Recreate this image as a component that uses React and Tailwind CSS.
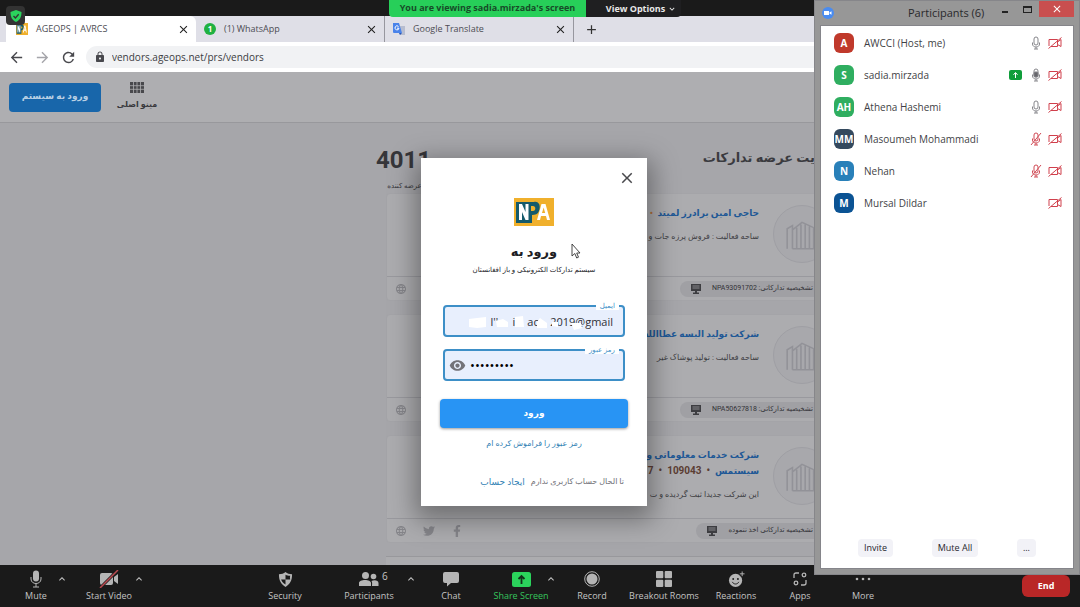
import React from 'react';
import { MdRemoveRedEye, MdLock, MdArrowBack, MdArrowForward, MdRefresh, MdClose, MdAdd, MdKeyboardArrowDown, MdKeyboardArrowUp, MdLanguage } from 'react-icons/md';
import { FaTwitter, FaFacebookF } from 'react-icons/fa';

const latin = "font-['Open_Sans','Noto_Sans',sans-serif]";

function NpaLogo({ className }) {
  return (
    <svg viewBox="0 0 40 28" className={className} preserveAspectRatio="none" aria-hidden="true">
      <rect width="40" height="28" fill="#f0b02c" />
      <path d="M2 4H20C25 3 27 8 25 13C24 16 21 17 18 17V25H2Z" fill="#155a6b" />
      <path d="M5 22V6H8L11.500 14V6H14.500V22H11.500L8 14V22Z" fill="#fff" />
      <path d="M17 8H19C22 8 22 13 19 13H17Z" fill="#f0b02c" />
      <path d="M23 22L27.500 6H31.500L36 22H33L32 18H27L26 22ZM28 15H31.200L29.600 9.500Z" fill="#fff" fillRule="evenodd" />
    </svg>
  );
}

function Tab({ icon, title, active }) {
  return (
    <div className={active ? 'flex w-[190px] items-center gap-2 rounded-t-md bg-white pr-1.5 pl-2.5' : 'flex w-[189px] items-center gap-2 border-r border-[#97979f] bg-[#dfdfe7] bg-clip-padding pr-1.5 pl-2'}>
      {icon}
      <span className="flex-1 text-[9px] text-[#4c4c53]">{title}</span>
      <button aria-label={'Close ' + title} className="text-[#222]"><MdClose size={13} /></button>
    </div>
  );
}

function Building() {
  return (
    <div className="flex size-[58px] shrink-0 items-center justify-center rounded-full border border-[#9f9fa4] bg-[#a8a8ac]">
      <svg viewBox="0 0 34 34" className="size-9" fill="none" stroke="#929298" strokeWidth="1.500" aria-hidden="true">
        <path d="M3 31V12L8 9V31M8 13L17 6L28 11V31H8M12 11V31M16 8V31M20 8V31M24 10V31M28 14L32 17V31H28" />
      </svg>
    </div>
  );
}

function ChipIcon() {
  return (
    <svg viewBox="0 0 12 12" className="size-3 shrink-0" aria-hidden="true">
      <path d="M1 1H11V8H7V9.500H9V11H3V9.500H5V8H1Z" fill="#3d3d41" />
      <path d="M2.500 3H9.500M2.500 5H9.500" stroke="#9d9da0" strokeWidth=".8" />
    </svg>
  );
}

function Company({ name, second, note, chip, social }) {
  return (
    <article className="flex h-[108px] flex-col rounded-sm border border-[#a4a4a8] bg-[#acacaf]">
      <div className="flex h-[82px] gap-3.5 pt-[11px] pr-10">
        <Building />
        <div className="min-w-0 flex-1 overflow-hidden whitespace-nowrap">
          <h2 className="text-[9px] leading-4 font-bold text-[#1e5896]">{name}</h2>
          {second && <p className="text-[9px] leading-4 font-bold text-[#1e5896]">{second}</p>}
          <p className="mt-2 text-[8px] leading-4 text-[#3e3e43]">{note}</p>
        </div>
      </div>
      <div className="flex flex-1 items-center justify-between border-t border-[#99999e]">
        <div className="flex h-4 items-center gap-2.5 rounded-l-full bg-[#a0a0a4] pr-[58px] pl-2.5 text-[7px] whitespace-nowrap text-[#333338]">
          <span>{chip}</span>
          <ChipIcon />
        </div>
        <div dir="ltr" className="flex gap-4 pl-2 text-[#85858a]">
          <MdLanguage size={12} />
          {social && <FaTwitter size={12} />}
          {social && <FaFacebookF size={12} />}
        </div>
      </div>
    </article>
  );
}

function MicIcon({ muted, filled }) {
  return (
    <svg viewBox="0 0 12 14" className="h-3.5 w-3" fill="none" stroke={muted ? '#d04a55' : '#85858a'} aria-hidden="true">
      <rect x="4" y="1" width="4" height="8" rx="2" />
      {filled && <rect x="4" y="4" width="4" height="5" rx="1" fill="#66666c" />}
      <path d="M2.500 6.500V8C2.500 12 9.500 12 9.500 8V6.500M6 11V13M4 13H8" />
      {muted && <path d="M11 1L1 13" />}
    </svg>
  );
}

function CamOffIcon() {
  return (
    <svg viewBox="0 0 14 12" className="h-3 w-3.5" fill="none" stroke="#d0404c" aria-hidden="true">
      <path d="M9.500 7.500V9.500H3M1 9V2.500H9.500V5L13 2.500V9.500L9.500 7.500V5M13.500 .5L.5 11.500" />
    </svg>
  );
}

const people = [
  { initials: 'A', name: 'AWCCI (Host, me)', color: 'bg-[#c0392b]', mic: 'on' },
  { initials: 'S', name: 'sadia.mirzada', color: 'bg-[#2fae60]', mic: 'talking', sharing: true },
  { initials: 'AH', name: 'Athena Hashemi', color: 'bg-[#2fae60]', mic: 'on' },
  { initials: 'MM', name: 'Masoumeh Mohammadi', color: 'bg-[#34495e]', mic: 'muted' },
  { initials: 'N', name: 'Nehan', color: 'bg-[#2980b9]', mic: 'muted' },
  { initials: 'M', name: 'Mursal Dildar', color: 'bg-[#0b5394]' },
];

function Participants() {
  return (
    <aside className="absolute top-0 right-0 z-30 flex h-[575px] w-[266px] flex-col border border-[#86868a] bg-[#979797] px-[5px] pb-[5px]">
      <header className="flex h-6 shrink-0 items-center pl-0.5">
        <span className="flex size-3 items-center justify-center rounded-full bg-[#4a8cf0]">
          <svg viewBox="0 0 8 6" className="w-2" fill="#fff" aria-hidden="true"><path d="M0 1H5V5H0ZM5.500 2.500L7.500 1.300V4.700L5.500 3.500Z" /></svg>
        </span>
        <h2 className="ml-[74px] text-[11px] text-[#29292c]">Participants (6)</h2>
        <div className="ml-auto flex items-start self-start">
          <button aria-label="Minimize" className="flex h-4 w-5 items-end justify-center pb-1"><span className="h-0.5 w-1.5 bg-[#222]" /></button>
          <button aria-label="Maximize" className="flex h-4 w-6 items-center justify-center"><span className="h-[7px] w-[9px] border border-t-2 border-[#222]" /></button>
          <button aria-label="Close window" className="flex h-4 w-[35px] items-center justify-center bg-[#c94f4f] text-white"><MdClose size={12} /></button>
        </div>
      </header>
      <div className="flex flex-1 flex-col border border-[#85858a] bg-white">
        <ul className="flex flex-col gap-3 pt-[7px] pr-[11px] pl-[13px]">
          {people.map((p) => (
            <li key={p.name} className="flex h-5 items-center">
              <span className={'flex size-5 items-center justify-center rounded-md text-[10px] font-bold text-white ' + p.color}>{p.initials}</span>
              <span className="ml-2.5 flex-1 text-[10px] text-[#3f3f46]">{p.name}</span>
              <span className="flex items-center gap-1.5">
                {p.sharing && <svg viewBox="0 0 13 10" className="mr-0.5 w-[13px]" aria-hidden="true"><rect width="13" height="10" rx="2" fill="#0f9d3a" /><path d="M6.500 8V3M4.500 4.800L6.500 2.500L8.500 4.800" stroke="#fff" fill="none" /></svg>}
                {p.mic && <MicIcon muted={p.mic === 'muted'} filled={p.mic === 'talking'} />}
                <CamOffIcon />
              </span>
            </li>
          ))}
        </ul>
        <div className="mt-auto mb-[11px] flex justify-between px-[37px] text-[9px] font-medium text-[#26262e]">
          <button className="h-[18px] rounded bg-[#f2f2f7] px-1.5">Invite</button>
          <button className="h-[18px] rounded bg-[#f2f2f7] px-1.5">Mute All</button>
          <button aria-label="More options" className="h-[18px] rounded bg-[#f2f2f7] px-1.5">...</button>
        </div>
      </div>
    </aside>
  );
}

function Tool({ label, width, green, children }) {
  return (
    <button className={'flex shrink-0 flex-col items-center whitespace-nowrap text-[9px] leading-3 ' + width + (green ? ' text-[#35c65d]' : ' text-[#c4c4c4]')}>
      <span className="relative flex h-[18px] items-center">{children}</span>
      <span className="mt-0.5">{label}</span>
    </button>
  );
}

function Caret({ label, className }) {
  return <button aria-label={label} className={'flex h-[18px] w-3 shrink-0 items-center justify-center text-[#c4c4c4] ' + (className || '')}><MdKeyboardArrowUp size={12} /></button>;
}

function MeetingBar() {
  return (
    <footer className="flex h-[42px] shrink-0 items-start bg-[#1a1a1a] pt-[5px] pl-4">
      <Tool label="Mute" width="w-10">
        <svg viewBox="0 0 12 18" className="w-3" aria-hidden="true"><rect x="3" y="0.500" width="6" height="11" rx="3" fill="#b5b5b5" /><path d="M1 7V9C1 15 11 15 11 9V7M6 13.500V17M3 17H9" stroke="#b5b5b5" fill="none" /></svg>
      </Tool>
      <Caret label="Audio settings" />
      <Tool label="Start Video" width="ml-[17px] w-12">
        <svg viewBox="0 0 20 18" className="w-5" aria-hidden="true"><rect x="1" y="3" width="13" height="12" rx="2" fill="#b5b5b5" /><path d="M15 7L19 4V14L15 11Z" fill="#b5b5b5" /><path d="M19 0L1 18" stroke="#1a1a1a" strokeWidth="3" /><path d="M19 0L1 18" stroke="#b94a50" strokeWidth="1.500" /></svg>
      </Tool>
      <Caret label="Video settings" />
      <Tool label="Security" width="ml-[116px] w-12">
        <svg viewBox="0 0 16 18" className="w-[15px]" aria-hidden="true"><path d="M8 1C10 3 12 3 15 3.500C15 10 13 14 8 17C3 14 1 10 1 3.500C4 3 6 3 8 1Z" fill="#b5b5b5" /><path d="M8 4V9H13C12.500 6 13 6 13 5C11 5 9.500 4.700 8 4ZM8 9V14.500C5 12.500 4 11 3.300 9Z" fill="#1a1a1a" /></svg>
      </Tool>
      <Tool label="Participants" width="ml-8 w-14">
        <svg viewBox="0 0 20 16" className="w-5" fill="#b5b5b5" aria-hidden="true"><circle cx="6.500" cy="4.500" r="3.500" /><circle cx="14.500" cy="5.500" r="2.800" /><path d="M0 15V12C0 8 12 8 12 12V15ZM13 15H19.500V12C19.500 9 15 8.500 12.500 10C13.500 12 13 13 13 15Z" /></svg>
        <span className="absolute top-0 left-[23px] text-[10px]">6</span>
      </Tool>
      <Caret label="Participant settings" className="ml-2" />
      <Tool label="Chat" width="ml-[18px] w-8">
        <svg viewBox="0 0 16 16" className="w-4" aria-hidden="true"><path d="M2 1H14Q16 1 16 3V10Q16 12 14 12H8L4 15.500V12H2Q0 12 0 10V3Q0 1 2 1Z" fill="#b5b5b5" /></svg>
      </Tool>
      <Tool label="Share Screen" width="ml-[26px] w-14" green>
        <svg viewBox="0 0 19 15" className="w-[19px]" aria-hidden="true"><rect width="19" height="15" rx="2.500" fill="#2bd35c" /><path d="M9.500 12V4.500M6.500 7L9.500 4L12.500 7" stroke="#12301b" strokeWidth="1.800" fill="none" /></svg>
      </Tool>
      <Caret label="Share settings" className="-ml-1" />
      <Tool label="Record" width="ml-[15px] w-10">
        <svg viewBox="0 0 16 16" className="w-4" aria-hidden="true"><circle cx="8" cy="8" r="7.300" fill="none" stroke="#b5b5b5" /><circle cx="8" cy="8" r="5.500" fill="#b5b5b5" /></svg>
      </Tool>
      <Tool label="Breakout Rooms" width="ml-4 w-18">
        <svg viewBox="0 0 16 16" className="w-4" fill="#b5b5b5" aria-hidden="true"><rect width="7.300" height="7.300" rx="1" /><rect x="8.700" width="7.300" height="7.300" rx="1" /><rect y="8.700" width="7.300" height="7.300" rx="1" /><rect x="8.700" y="8.700" width="7.300" height="7.300" rx="1" /></svg>
      </Tool>
      <Tool label="Reactions" width="ml-3 w-12">
        <svg viewBox="0 0 18 18" className="w-[17px]" aria-hidden="true"><circle cx="8" cy="10" r="7" fill="#b5b5b5" /><circle cx="5.500" cy="8.500" r="1" fill="#1a1a1a" /><circle cx="10.500" cy="8.500" r="1" fill="#1a1a1a" /><path d="M4.500 11.500C6 14.500 10 14.500 11.500 11.500" stroke="#1a1a1a" fill="none" /><path d="M15 0V6M12 3H18" stroke="#1a1a1a" strokeWidth="3" /><path d="M15 .5V5.500M12.500 3H17.500" stroke="#b5b5b5" /></svg>
      </Tool>
      <Tool label="Apps" width="ml-6 w-8">
        <svg viewBox="0 0 14 14" className="w-3.5" fill="none" stroke="#b5b5b5" strokeWidth="1.300" aria-hidden="true"><path d="M1 6V3Q1 1 3 1H6M13 8V11Q13 13 11 13H8" /><circle cx="11" cy="3" r="1.800" /><circle cx="3" cy="11" r="1.800" /></svg>
      </Tool>
      <Tool label="More" width="ml-[31px] w-8">
        <svg viewBox="0 0 16 4" className="w-4" fill="#b5b5b5" aria-hidden="true"><circle cx="2" cy="2" r="1.300" /><circle cx="8" cy="2" r="1.300" /><circle cx="14" cy="2" r="1.300" /></svg>
      </Tool>
      <button className="mt-[5px] mr-2.5 ml-auto h-[22px] w-12 rounded-md bg-[#b92727] text-[9px] font-bold text-white">End</button>
    </footer>
  );
}

function LoginDialog() {
  return (
    <section dir="rtl" role="dialog" aria-label="ورود" className="flex h-[348px] w-[226px] flex-col bg-white px-[19px] shadow-[0_8px_24px_6px_rgba(0,0,0,0.35)]">
      <div className="flex h-10 items-center">
        <button aria-label="بستن" className="-mr-2 text-[#48484c]"><MdClose size={18} /></button>
      </div>
      <NpaLogo className="h-7 w-10 self-center" />
      <h1 className="mt-4 text-center text-[13px] leading-5 font-bold text-[#202024]">ورود به</h1>
      <p className="text-center text-[7px] leading-4 text-[#222228]">سیستم تدارکات الکترونیکی و باز افغانستان</p>
      <form className="mt-6 flex flex-col" onSubmit={(e) => e.preventDefault()}>
        <fieldset className="mx-[3px] h-[35px] rounded border-2 border-[#3d8fc7] bg-[#e8effd] px-1">
          <legend className="bg-white px-1 text-[7px] leading-2 text-[#3d8fc7]"><label htmlFor="email">ایمیل</label></legend>
          <div className="relative">
            <input id="email" dir="ltr" type="text" defaultValue="l'',    i-   ac    2019@gmail" className={'block h-[22px] w-full bg-transparent pr-1.5 text-right text-[11px] text-[#2f2f35] outline-none ' + latin} />
            <svg viewBox="0 0 120 22" className="pointer-events-none absolute top-0 left-5 w-[120px]" fill="#fff" aria-hidden="true">
              <path d="M0 9L8 8L17 7V17L8 18L0 17ZM27 11L34 9L39 12V17H28ZM46 7L54 6L55 17H46ZM68 12L71 8L78 13V18H68ZM83 12H89V17L83 16ZM102 13L112 13L113 18L105 20Z" />
            </svg>
          </div>
        </fieldset>
        <fieldset className="mx-[3px] mt-[9px] h-[35px] rounded border-2 border-[#3d8fc7] bg-[#e8effd] px-1">
          <legend className="bg-white px-1 text-[7px] leading-2 text-[#3d8fc7]"><label htmlFor="password">رمز عبور</label></legend>
          <div dir="ltr" className="flex items-center gap-1">
            <button type="button" aria-label="نمایش رمز" className="text-[#737379]"><MdRemoveRedEye size={17} /></button>
            <input id="password" type="password" defaultValue="password1" className={'h-[22px] w-full bg-transparent text-[13px] text-black outline-none ' + latin} />
          </div>
        </fieldset>
        <button className="mt-[18px] h-[29px] rounded-sm bg-[#2894f4] text-[9px] font-bold text-white shadow-[0_1px_3px_rgba(0,0,0,0.4)]">ورود</button>
      </form>
      <a href="#forgot" className="mt-2 self-center text-[8px] leading-4 text-[#3483b5]">رمز عبور را فراموش کرده ام</a>
      <p className="mt-[22px] flex items-center gap-1.5 pr-1 text-[8px] leading-4 whitespace-nowrap text-[#717177]">
        تا الحال حساب کاربری ندارم
        <a href="#signup" className="text-[9px] text-[#3483b5]">ایجاد حساب</a>
      </p>
    </section>
  );
}

export default function App() {
  return (
    <div className={'relative flex h-screen min-h-[607px] flex-col overflow-hidden bg-[#1a1a1a] ' + latin}>
      <div className="h-4 shrink-0" />
      <nav className="flex h-[26px] shrink-0 bg-[#dfdfe7] pl-[6px]">
        <Tab active title="AGEOPS | AVRCS" icon={<NpaLogo className="size-3" />} />
        <Tab title="(1) WhatsApp" icon={<span className="flex size-3 items-center justify-center rounded-full bg-[#1fb141] text-[8px] font-bold text-white">1</span>} />
        <Tab title="Google Translate" icon={
          <svg viewBox="0 0 12 12" className="size-3" aria-hidden="true"><path d="M5 3H12V12H7Z" fill="#b7bdd0" /><path d="M0 0H6L9 10H1Q0 10 0 9Z" fill="#4a83ea" /><path d="M5.500 3.500A2 2 0 1 0 6 5.200H4" fill="none" stroke="#fff" /><path d="M6 10H9L7 12Z" fill="#2857b5" /></svg>
        } />
        <button aria-label="New tab" className="ml-2.5 text-[#333]"><MdAdd size={15} /></button>
      </nav>
      <div className="flex h-[30px] shrink-0 items-center gap-[9px] bg-white pl-2 text-[#48484d]">
        <button aria-label="Back"><MdArrowBack size={17} /></button>
        <button aria-label="Forward" className="text-[#a5a5aa]"><MdArrowForward size={17} /></button>
        <button aria-label="Reload"><MdRefresh size={17} /></button>
        <div className="flex h-[22px] flex-1 items-center gap-1.5 rounded-l-full bg-[#f1f2f4] pl-2">
          <MdLock size={12} />
          <input aria-label="Address" className="min-w-0 flex-1 bg-transparent text-[10px] text-[#3c3c42] outline-none" defaultValue="vendors.ageops.net/prs/vendors" />
        </div>
      </div>

      <main className="relative min-h-0 flex-1 overflow-hidden bg-[#a6a6aa] font-['Roboto','DejaVu_Sans',sans-serif]">
        <div className="flex h-[51px] items-center border-b border-[#98989c] bg-[#aeaeb1] pl-[9px]">
          <button dir="rtl" className="h-[29px] w-[92px] rounded-sm bg-[#1866aa] text-[9px] font-bold text-[#b9d0e4]">ورود به سیستم</button>
          <button dir="rtl" className="ml-4 flex w-10 flex-col items-center gap-1 text-[8px] leading-4 font-bold whitespace-nowrap text-[#38383c]">
            <svg viewBox="0 0 14 11" className="w-3.5" aria-hidden="true"><path d="M0 0H14V11H0Z" fill="#48484c" /><path d="M3.500 0V11M7 0V11M10.500 0V11M0 3.700H14M0 7.300H14" stroke="#aeaeb1" strokeWidth=".8" /></svg>
            مینو اصلی
          </button>
        </div>
        <div dir="rtl" className="-mt-px mr-[204px] ml-[386px]">
          <div className="flex h-[71px] items-start justify-between pt-6 pr-[61px]">
            <h1 className="text-[13px] leading-6 font-bold whitespace-nowrap text-[#3b3b40]">یت عرضه تدارکات</h1>
            <div className="-ml-2 w-[53px] text-center whitespace-nowrap text-[#36363a]">
              <p className="text-[24px] leading-7 font-bold">4011</p>
              <p className="mt-1 text-[7px] leading-4">عرضه کننده</p>
            </div>
          </div>
        </div>
        <div dir="rtl" className="ml-[386px] flex flex-col gap-[13px] pr-[208px]">
          <Company name={<>حاجی امین برادرز لمیتد <span className="text-[#b0703c]">&nbsp;•</span></>} note="ساحه فعالیت : فروش پرزه جات و" chip="تشخیصیه تدارکاتی: NPA93091702" />
          <Company name="شرکت تولید البسه عطاالله ف" note="ساحه فعالیت : تولید پوشاک غیر" chip="تشخیصیه تدارکاتی: NPA50627818" />
          <Company name="شرکت خدمات معلوماتی و ارت" second={<>سیستمس <span className="text-[10px] text-[#5b3d33]">&nbsp;•&nbsp; 109043 &nbsp;•&nbsp; 7</span></>} note="این شرکت جدیدا ثبت گردیده و ت" chip="تشخیصیه تدارکاتی اخذ ننموده" social />
          <div className="h-12 border-t border-[#98989c] bg-[#acacaf]" />
        </div>
        <div className="absolute inset-0 z-10 flex items-start justify-center pt-[86px] pr-3">
          <LoginDialog />
        </div>
        <svg viewBox="0 0 10 16" className="absolute top-[171px] left-[571px] z-20 h-4 w-2.5" fill="#fff" stroke="#333" strokeWidth=".9" aria-hidden="true"><path d="M1 1V13L3.800 10.500L5.700 15L7.500 14.200L5.700 10H9Z" /></svg>
      </main>

      <MeetingBar />

      <span className="absolute top-1.5 left-1.5 z-20 flex size-[19px] items-center justify-center rounded bg-[#333]">
        <svg viewBox="0 0 12 12" className="size-3" aria-hidden="true"><path d="M6 0L11.500 2C11.500 7 10 10 6 12C2 10 .5 7 .5 2Z" fill="#2bd35c" /><path d="M3.500 6L5.400 8L8.700 4.200" stroke="#333" strokeWidth="1.300" fill="none" /></svg>
      </span>
      <div className="absolute top-0 left-[389px] z-20 flex h-[17px] overflow-hidden rounded-b text-[9px] leading-4 font-bold whitespace-nowrap">
        <p className="w-[197px] bg-[#27cf59] text-center text-[#174b28]">You are viewing sadia.mirzada's screen</p>
        <button className="flex w-[95px] items-center justify-center gap-0.5 bg-[#1f1f21] pl-4 text-[#e8e8e8]">View Options <MdKeyboardArrowDown size={10} /></button>
      </div>
      <Participants />
    </div>
  );
}
